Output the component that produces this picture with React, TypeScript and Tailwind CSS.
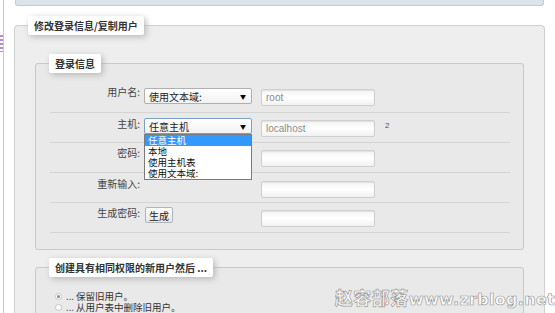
import { ReactNode } from 'react';

const cjk = "font-['Noto_Sans_CJK_SC','Noto_Sans',sans-serif]";

type RowProps = {
  label: string;
  labelClass: string;
  control?: ReactNode;
  inputClass: string;
  value?: string;
  extra?: ReactNode;
};

const Input = ({ value, className }: { value?: string; className: string }) => (
  <div
    className={`ml-[9px] flex h-[17px] w-[114px] items-center rounded-[2px] border border-[#cfcfcf] bg-linear-to-b from-[#f4f4f4] via-white to-[#f1f1f1] px-[4px] text-[10px] text-[#8a8a8a] shadow-[inset_0_1px_1px_#e2e2e2] font-['Liberation_Sans',sans-serif] ${className}`}
  >
    {value}
  </div>
);

const Row = ({ label, labelClass, control, inputClass, value, extra }: RowProps) => (
  <div className="flex h-[30px] border-b border-[#d4d4d4]">
    <div className={`w-[90px] text-right text-[10px] leading-[12px] text-[#444] ${labelClass}`}>
      {label}
    </div>
    <div className="ml-[4px] w-[108px]">{control}</div>
    <Input value={value} className={inputClass} />
    {extra}
  </div>
);

const Select = ({ value, focused, className }: { value: string; focused?: boolean; className: string }) => (
  <div
    className={`flex h-[16px] w-[108px] items-center justify-between rounded-[2px] border bg-linear-to-b from-white to-[#f2f2f2] pr-[5px] pl-[4px] text-[10px] text-[#222] ${
      focused ? 'border-[#7f9fc9]' : 'border-[#b0b0b0]'
    } ${className}`}
  >
    <span>{value}</span>
    <span className="text-[6px] text-black">▼</span>
  </div>
);

const Legend = ({ children, className }: { children: ReactNode; className: string }) => (
  <legend
    className={`h-[19px] rounded-[2px] bg-white px-[6px] text-[10px] leading-[19px] font-bold text-[#333] shadow-[2px_2px_6px_#b8b8b8] ${className}`}
  >
    {children}
  </legend>
);

const Radio = ({ checked }: { checked?: boolean }) => (
  <span className="flex h-[7px] w-[7px] items-center justify-center rounded-full border border-[#c4c4c4] bg-white">
    {checked ? <span className="h-[3px] w-[3px] rounded-full bg-[#888]" /> : null}
  </span>
);

const App = () => {
  return (
    <div className={`relative flex h-[313px] w-[555px] overflow-hidden bg-white ${cjk}`}>
      <div className="w-[3px]">
        <div className="mt-[35px] h-[17px] w-[3px] bg-[repeating-linear-gradient(#b38ad6_0_2px,transparent_2px_4px)]" />
      </div>
      <div className="w-px bg-[#cbcbcb]" />

      <div className="flex-1 px-[10px]">
        <div className="mx-px h-[6px] rounded-b-[3px] border border-t-0 border-[#c3cad2] bg-[#dde3ea]" />

        <fieldset className="mt-[10px] rounded-[4px] border border-[#cfcfcf] bg-[#eeeeee] px-[20px] pb-[20px]">
          <Legend className="-ml-[7px]">修改登录信息/复制用户</Legend>

          <fieldset className="mt-[19px] rounded-[3px] border border-[#c9c9c9] bg-[#e9e9e9] pr-[13px] pb-[16px] pl-[14px]">
            <Legend className="-ml-px">登录信息</Legend>

            <div className="mt-[10px]">
              <Row
                label="用户名:"
                labelClass="mt-[3px]"
                control={<Select value="使用文本域:" className="mt-[5px]" />}
                inputClass="mt-[6px]"
                value="root"
              />
              <Row
                label="主机:"
                labelClass="mt-[5px]"
                control={
                  <div className="relative mt-[5px]">
                    <Select value="任意主机" focused className="" />
                    <div className="absolute top-[16px] left-0 z-10 w-[108px] border border-[#7a7a7a] bg-white text-[9.5px] leading-[11px] text-[#111]">
                      <div className="h-[11px] bg-[#3399ff] pl-[3px] text-white">任意主机</div>
                      <div className="h-[11px] pl-[3px]">本地</div>
                      <div className="h-[11px] pl-[3px]">使用主机表</div>
                      <div className="h-[11px] pl-[3px]">使用文本域:</div>
                    </div>
                  </div>
                }
                inputClass="mt-[7px]"
                value="localhost"
                extra={
                  <span className="mt-[8px] ml-[10px] text-[8px] leading-[10px] text-[#555] font-['Liberation_Sans',sans-serif]">
                    2
                  </span>
                }
              />
              <Row label="密码:" labelClass="mt-[4px]" inputClass="mt-[7px]" />
              <Row label="重新输入:" labelClass="mt-[5px]" inputClass="mt-[8px]" />
              <Row
                label="生成密码:"
                labelClass="mt-[4px]"
                control={
                  <div className="mt-[4px] ml-px flex h-[16px] w-[28px] items-center justify-center rounded-[2px] border border-[#b4b4b4] bg-linear-to-b from-white to-[#e6e6e6] text-[10px] text-[#222]">
                    生成
                  </div>
                }
                inputClass="mt-[7px]"
              />
            </div>
          </fieldset>

          <fieldset className="mt-[8px] rounded-[3px] border border-[#c9c9c9] bg-[#e9e9e9] pr-[13px] pb-[16px] pl-[14px]">
            <Legend className="-ml-px">创建具有相同权限的新用户然后 ...</Legend>
            <div className="mt-[14px] text-[9.5px] leading-[11px] text-[#333]">
              <div className="flex h-[11px] items-center gap-[4px] pl-[5px]">
                <Radio checked />
                <span>... 保留旧用户。</span>
              </div>
              <div className="flex h-[11px] items-center gap-[4px] pl-[5px]">
                <Radio />
                <span>... 从用户表中删除旧用户。</span>
              </div>
            </div>
          </fieldset>
        </fieldset>
      </div>

      <div className="absolute top-[287px] right-0 flex items-baseline font-bold text-white [-webkit-text-stroke:0.7px_#9a9a9a]">
        <span className="text-[18px] leading-[20px] tracking-[0.5px]">赵容部落</span>
        <span className="text-[16px] leading-[20px] tracking-[0.3px] font-['DejaVu_Sans',sans-serif]">www.zrblog.net</span>
      </div>
    </div>
  );
};

export default App;
